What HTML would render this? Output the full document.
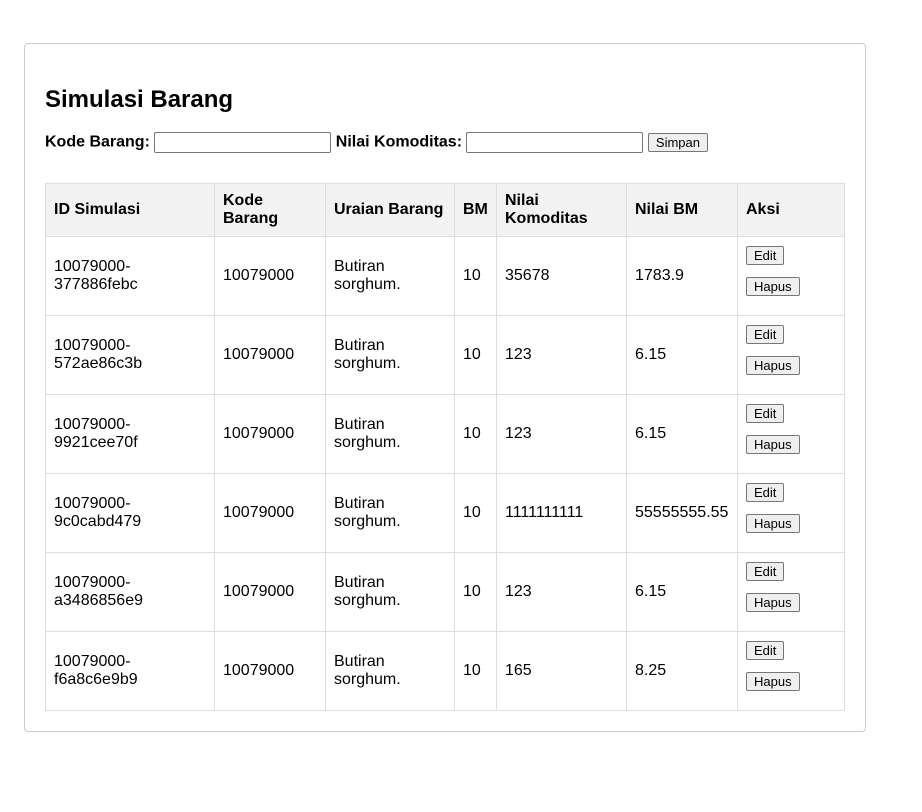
<!DOCTYPE html>
<html><head><style>
body{margin:0;background:#fff;font-family:"Liberation Sans",Arial,sans-serif;font-size:16px;color:#000;}
.box{position:absolute;left:24px;top:43px;width:840px;height:687px;border:1px solid #ccc;border-radius:4px;}
h2{position:absolute;left:20px;top:42px;margin:0;font-size:24px;font-weight:bold;}
.form{position:absolute;left:20px;top:88px;font-weight:bold;white-space:nowrap;}
.form input[type=text]{width:171px;height:17px;border:1px solid #767676;border-radius:2px;padding:1px 2px;vertical-align:middle;margin:0;}
button{font-family:"Liberation Sans",Arial,sans-serif;font-size:13px;background:#efefef;border:1px solid #767676;border-radius:2px;padding:1px 7px;height:19px;line-height:15px;}
.form button{vertical-align:middle;margin-left:0;}
table{position:absolute;left:20px;top:139px;border-collapse:collapse;}
th,td{border:1px solid #ddd;padding:0 8px;text-align:left;line-height:18px;}
th{background:#f2f2f2;height:52px;}
td{height:78px;}
td.a button{display:block;margin:-10px 0 0 0;}
td.a button+button{margin-top:12px;}
</style></head><body>
<div class="box">
<h2>Simulasi Barang</h2>
<div class="form">Kode Barang: <input type="text"> Nilai Komoditas: <input type="text"> <button>Simpan</button></div>
<table>
<colgroup><col style="width:169px"><col style="width:111px"><col style="width:129px"><col style="width:42px"><col style="width:130px"><col style="width:111px"><col style="width:107px"></colgroup>
<tr><th>ID Simulasi</th><th>Kode<br>Barang</th><th>Uraian Barang</th><th>BM</th><th>Nilai<br>Komoditas</th><th>Nilai BM</th><th>Aksi</th></tr>
<tr><td>10079000-<br>377886febc</td><td>10079000</td><td>Butiran<br>sorghum.</td><td>10</td><td>35678</td><td>1783.9</td><td class="a"><button>Edit</button><button>Hapus</button></td></tr>
<tr><td>10079000-<br>572ae86c3b</td><td>10079000</td><td>Butiran<br>sorghum.</td><td>10</td><td>123</td><td>6.15</td><td class="a"><button>Edit</button><button>Hapus</button></td></tr>
<tr><td>10079000-<br>9921cee70f</td><td>10079000</td><td>Butiran<br>sorghum.</td><td>10</td><td>123</td><td>6.15</td><td class="a"><button>Edit</button><button>Hapus</button></td></tr>
<tr><td>10079000-<br>9c0cabd479</td><td>10079000</td><td>Butiran<br>sorghum.</td><td>10</td><td>1111111111</td><td>55555555.55</td><td class="a"><button>Edit</button><button>Hapus</button></td></tr>
<tr><td>10079000-<br>a3486856e9</td><td>10079000</td><td>Butiran<br>sorghum.</td><td>10</td><td>123</td><td>6.15</td><td class="a"><button>Edit</button><button>Hapus</button></td></tr>
<tr><td>10079000-<br>f6a8c6e9b9</td><td>10079000</td><td>Butiran<br>sorghum.</td><td>10</td><td>165</td><td>8.25</td><td class="a"><button>Edit</button><button>Hapus</button></td></tr>
</table>
</div>
</body></html>
